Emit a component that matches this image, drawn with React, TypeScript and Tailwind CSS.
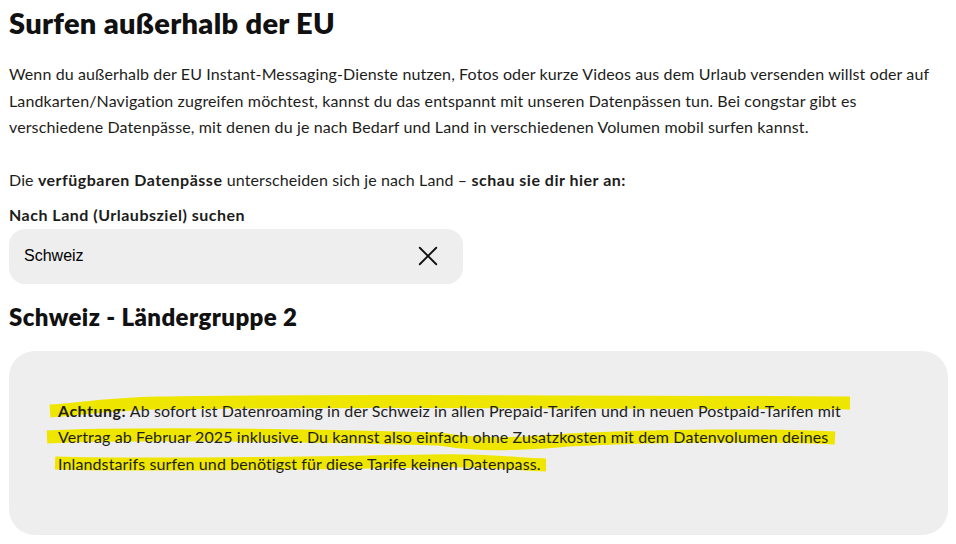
export default function App() {
    return (
        <div className="bg-white min-h-screen text-[#1d1d1b] font-['Lato',sans-serif] tracking-[0.12px]">
            <div className="pl-[9px] pr-[8px] pt-[5px]">
                {/* Intro */}
                <h1 className="text-[29px] leading-[36px] font-extrabold tracking-[0.3px] text-[#111]">Surfen außerhalb der EU</h1>
                <p className="mt-[20px] text-[16px] leading-[26.5px]">
                    Wenn du außerhalb der EU Instant-Messaging-Dienste nutzen, Fotos oder kurze Videos aus dem Urlaub versenden willst oder auf Landkarten/Navigation zugreifen möchtest, kannst du das entspannt mit unseren Datenpässen tun. Bei congstar gibt es verschiedene Datenpässe, mit denen du je nach Bedarf und Land in verschiedenen Volumen mobil surfen kannst.
                </p>
                <p className="mt-[26.5px] text-[16px] leading-[26.5px]">
                    Die <b className="tracking-[0.5px]">verfügbaren Datenpässe</b> unterscheiden sich je nach Land – <b className="tracking-[0.5px]">schau sie dir hier an:</b>
                </p>

                {/* Search */}
                <label className="block mt-[11px] text-[16px] leading-[20px] font-bold tracking-[0.5px]">Nach Land (Urlaubsziel) suchen</label>
                <div className="mt-[4px] w-[454px] h-[55px] bg-[#eeeeee] rounded-[16px] flex items-center justify-between pl-[15px] pr-[24px]">
                    <span className="font-['Liberation_Sans',Arial,sans-serif] text-[16px] tracking-normal text-black">Schweiz</span>
                    <svg width="22" height="22" viewBox="0 0 24 24" fill="none" stroke="#111" strokeWidth={2} strokeLinecap="round">
                        <path d="M3 3l18 18M21 3L3 21" />
                    </svg>
                </div>

                {/* Result */}
                <h2 className="mt-[18px] text-[24px] leading-[30px] font-extrabold tracking-[0.4px] text-[#111]">Schweiz - Ländergruppe 2</h2>
                <div className="relative mt-[19px] bg-[#eeeeee] rounded-[26px] h-[184px] pl-[49px] pr-[90px] pt-[47px]">
                    <svg className="absolute left-0 top-0" width="939" height="184" fill="none" stroke="#efe600" strokeWidth={13} strokeLinecap="butt">
                        <path d="M41 60 C70 58, 100 53, 150 52 C300 49, 600 51, 841 52" />
                        <path d="M38 86 C120 82, 300 84, 430 88 C480 96, 520 92, 560 89 C650 84, 760 84, 826 87" />
                        <path d="M46 112 C150 115, 300 112, 420 110 C480 108, 510 114, 537 114" />
                    </svg>
                    <p className="relative text-[16px] leading-[26.5px]">
                        <b className="tracking-[0.5px]">Achtung:</b> Ab sofort ist Datenroaming in der Schweiz in allen Prepaid-Tarifen und in neuen Postpaid-Tarifen mit Vertrag ab Februar 2025 inklusive. Du kannst also einfach ohne Zusatzkosten mit dem Datenvolumen deines Inlandstarifs surfen und benötigst für diese Tarife keinen Datenpass.
                    </p>
                </div>
            </div>
        </div>
    );
}
